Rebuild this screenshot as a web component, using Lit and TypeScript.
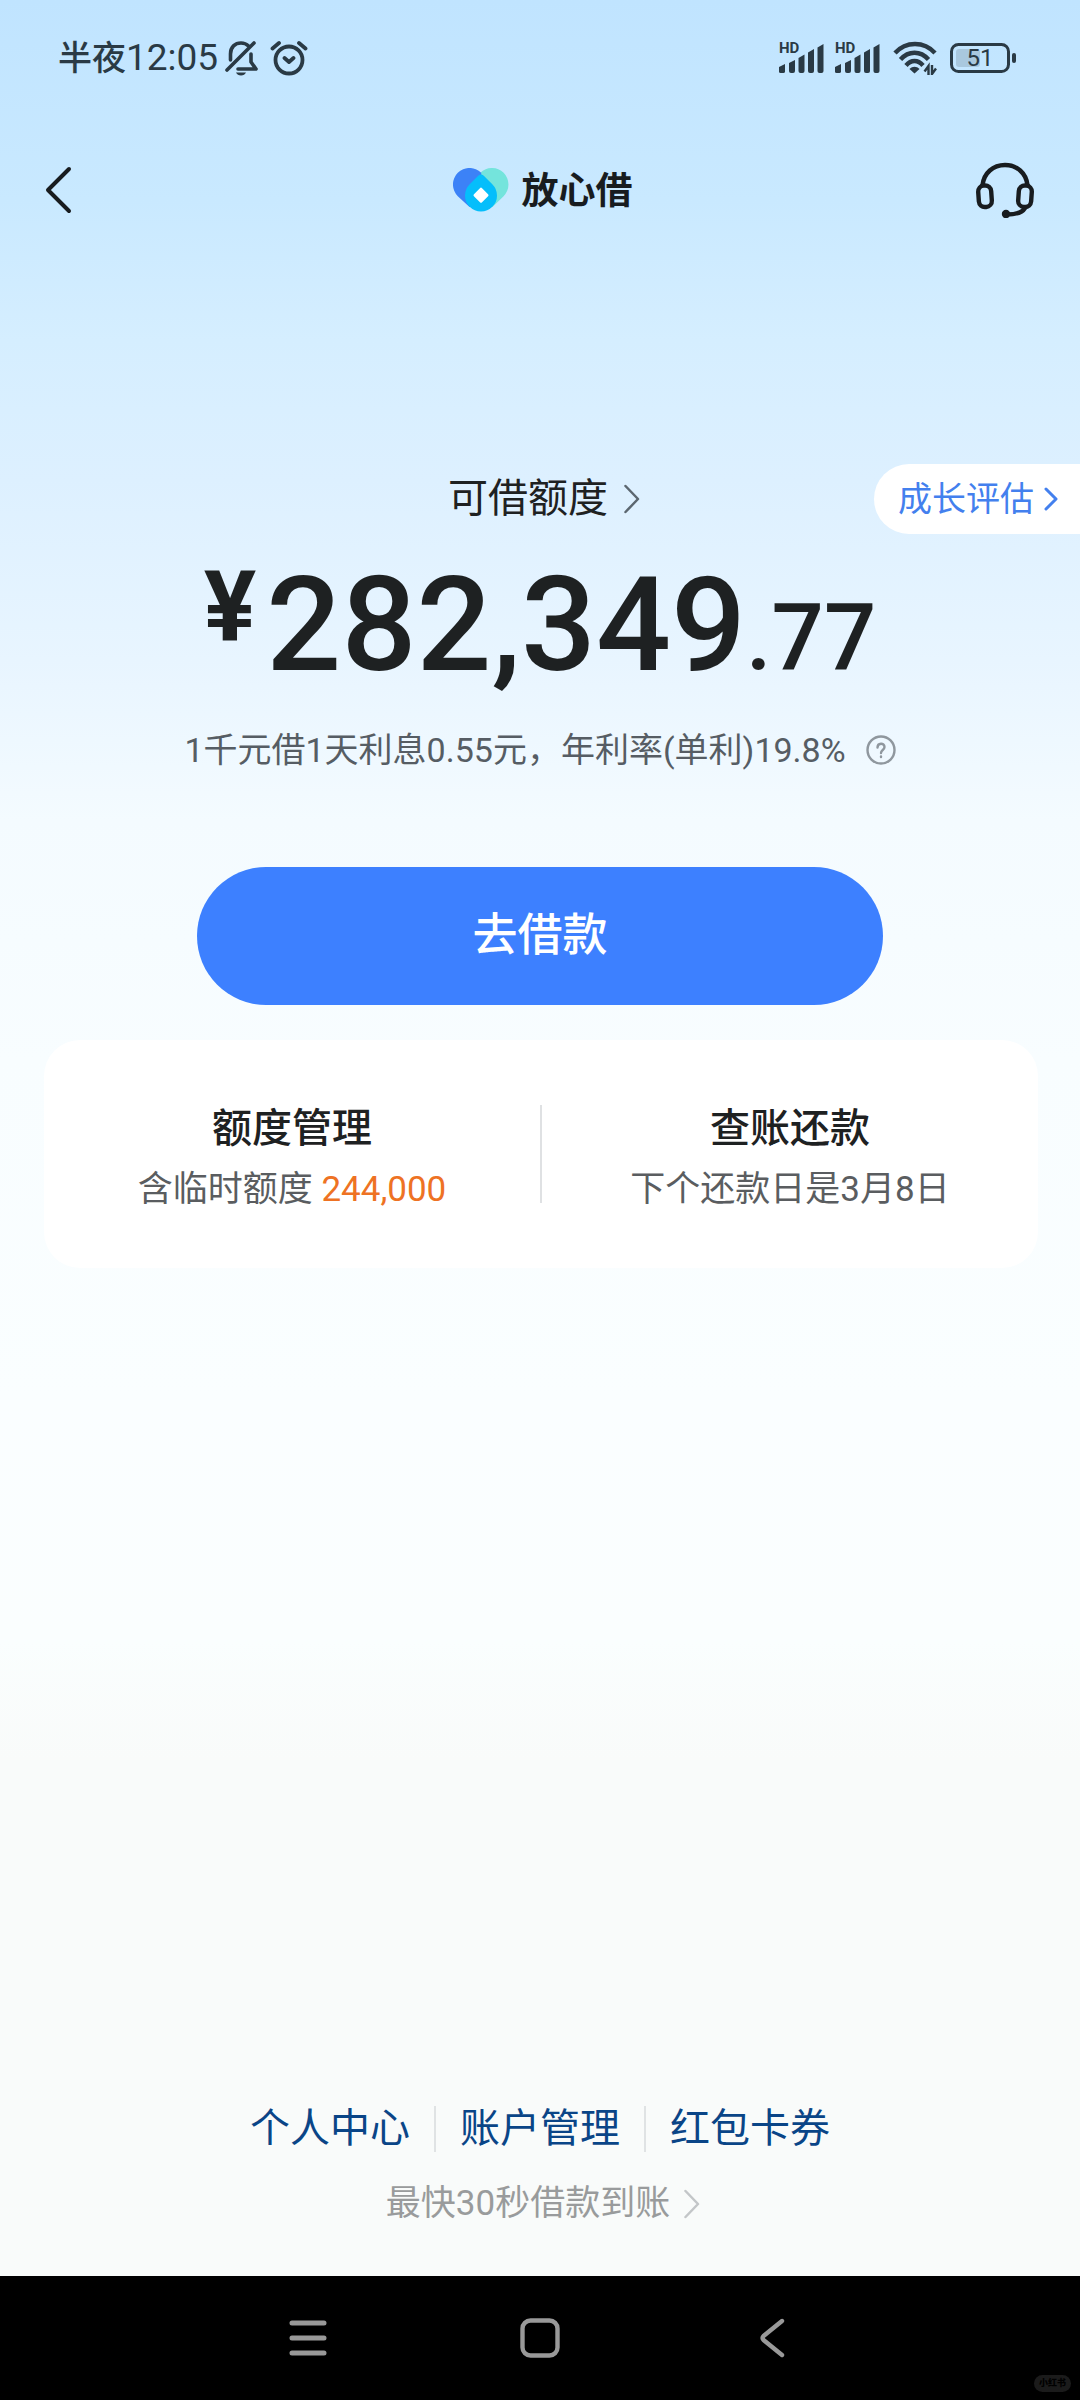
import { LitElement, html, css, svg } from "lit";
import { customElement } from "lit/decorators.js";

const signalBars = svg`
  <path d="M2 24l6-3v7.400a1.600 1.600 0 0 1-1.600 1.600H3.600A1.600 1.600 0 0 1 2 28.400Z"/>
  <path d="M12 20l6-3v11a2 2 0 0 1-2 2h-2a2 2 0 0 1-2-2Z"/>
  <path d="M21.500 15l6-3.500V28a2 2 0 0 1-2 2h-2a2 2 0 0 1-2-2Z"/>
  <path d="M31 9.500l6-3.500v22a2 2 0 0 1-2 2h-2a2 2 0 0 1-2-2Z"/>
  <path d="M40.500 4.500l6-3.500v27a2 2 0 0 1-2 2h-2a2 2 0 0 1-2-2Z"/>`;

@customElement("status-bar")
export class StatusBar extends LitElement {
  static styles = css`
    :host { display: flex; align-items: center; justify-content: space-between; padding: 34px 64px 0 58px; height: 48px; color: #2a3a45; font-family: Roboto, "Noto Sans CJK SC", sans-serif; }
    .side { display: flex; align-items: center; }
    .clock { font-size: 34px; line-height: 48px; font-weight: 500; margin-right: 6px; white-space: nowrap; }
    .time { font-size: 37px; font-weight: 400; }
    .gap { margin-right: 12px; }
    .signal { position: relative; display: flex; margin-right: 10px; }
    .hd { position: absolute; left: 0; top: -4px; font: 700 15px/18px Roboto, sans-serif; }
    .signal svg { fill: currentColor; }
    .wifi { margin: 0 13px 0 2px; }
    .battery { position: relative; display: flex; }
    .level { position: absolute; left: 0; top: 0; width: 60px; text-align: center; font: 400 24px/30px Roboto, sans-serif; }
  `;
  render() {
    const signal = html`<div class="signal">
      <span class="hd">HD</span>
      <svg width="46" height="30" viewBox="2 0 46 30">${signalBars}</svg>
    </div>`;
    return html`
      <div class="side">
        <span class="clock">半夜<span class="time">12:05</span></span>
        <svg class="gap" width="34" height="36" viewBox="0 0 34 36" fill="none" stroke="currentColor" stroke-width="3.600" stroke-linecap="round" stroke-linejoin="round">
          <path d="M6.500 20V14C6.500 7 11 3 17 3c3 0 5.500 1 7.500 3M27 14v8l5 7H14"/>
          <path d="M3 30L30 3"/>
          <path d="M12 32.500h10c-1 2-2.500 3-5 3s-4-1-5-3Z" fill="currentColor" stroke="none"/>
        </svg>
        <svg width="38" height="36" viewBox="0 0 38 36" fill="none" stroke="currentColor" stroke-width="3.800" stroke-linecap="round" stroke-linejoin="round">
          <circle cx="19" cy="20" r="13.500"/><path d="M14.500 18l4.500 4 4.500-4M2.500 8.500l6.500-5.500M35.500 8.500L29 3"/>
        </svg>
      </div>
      <div class="side">
        ${signal}${signal}
        <svg class="wifi" width="44" height="34" viewBox="0 0 44 34" fill="none" stroke="currentColor" stroke-width="4.400">
          <path d="M2 12C13 0 31 0 42 12M7.500 18.500c8-9 20-9 28 0M13 24.500c5-6 12-6 17 0"/>
          <path d="M21.500 32.500l-5-4.500c3-3 7-3 10 0Z" fill="currentColor" stroke="none"/>
          <path d="M35.500 34V25l-4 5.500M39 24v9l4-5.500" stroke-width="2.400"/>
        </svg>
        <div class="battery">
          <svg width="66" height="30" viewBox="0 0 66 30">
            <rect x="6" y="6" width="24" height="18" rx="3" fill="#a9c8de"/>
            <rect x="1.500" y="1.500" width="57" height="27" rx="7" fill="none" stroke="currentColor" stroke-width="3"/>
            <rect x="62" y="10" width="4" height="10" rx="2" fill="currentColor"/>
          </svg>
          <span class="level">51</span>
        </div>
      </div>`;
  }
}

@customElement("brand-header")
export class BrandHeader extends LitElement {
  static styles = css`
    :host { display: grid; grid-template-columns: 1fr auto 1fr; align-items: center; padding: 0 45px 0 44px; height: 64px; color: #181c1f; }
    button { all: unset; display: flex; cursor: pointer; }
    .help { justify-self: end; }
    .brand { display: flex; align-items: center; gap: 13px; padding-left: 6px; }
    .name { margin: 0; padding-bottom: 4px; font: 700 37px/48px "Noto Sans CJK SC", sans-serif; }
  `;
  render() {
    return html`
      <button aria-label="返回">
        <svg width="30" height="48" viewBox="0 0 30 48" fill="none" stroke="currentColor" stroke-width="4" stroke-linecap="round" stroke-linejoin="round"><path d="M25 3L4 24l21 21"/></svg>
      </button>
      <div class="brand">
        <svg width="56" height="44" viewBox="0 0 56 44">
          <path d="M50.600 28.200A16.500 16.500 0 1 0 27.300 4.800L28 30l11.500 9Z" fill="#74e4dc"/>
          <path d="M4.800 28.200A16.500 16.500 0 1 1 28.200 4.800L30 30l-13.500 9Z" fill="#3c82f7"/>
          <path d="M25.500 7.500q2.500-2 5 0l8.800 8.700a16 16 0 1 1-22.600 0Z" fill="#05befb"/>
          <path d="M28 21.200l6 6-6 6-6-6Z" fill="#fff" stroke="#fff" stroke-width="3" stroke-linejoin="round"/>
        </svg>
        <h1 class="name">放心借</h1>
      </div>
      <button class="help" aria-label="客服">
        <svg width="60" height="56" viewBox="0 0 60 56" fill="none" stroke="currentColor" stroke-width="4.400" stroke-linecap="round" stroke-linejoin="round">
          <path d="M7.500 23C9 11 18 3 30 3S51 11 52.500 23"/>
          <rect x="3.500" y="23.500" width="13" height="21.500" rx="6" transform="rotate(-4 10 34)"/>
          <rect x="43.500" y="23.500" width="13" height="21.500" rx="6" transform="rotate(4 50 34)"/>
          <path d="M50 46c-3 5-9 6.500-18 6.500"/><circle cx="31" cy="52" r="2" fill="currentColor"/>
        </svg>
      </button>`;
  }
}

@customElement("app-root")
export class AppRoot extends LitElement {
  static styles = css`
    :host {
      display: flex; flex-direction: column; min-height: 100vh; box-sizing: border-box; overflow: hidden;
      font-family: Roboto, "Noto Sans CJK SC", sans-serif; color: #1e2122;
      background: linear-gradient(#c0e4ff 0, #c9e9ff 200px, #d5eeff 340px, #ddf0ff 480px, #e8f5ff 660px, #f4fbff 820px, #f8fdff 1060px, #fafeff 1400px, #fafefe 1640px, #f9fbfa 1760px, #f9fbfa 100%);
    }
    a { color: inherit; text-decoration: none; }
    svg { flex: none; fill: none; stroke: currentColor; stroke-linecap: round; stroke-linejoin: round; }
    brand-header { margin-top: 76px; }
    main { display: flex; flex-direction: column; flex: 1; padding-top: 242px; }
    .quota { display: grid; grid-template-columns: 1fr auto 1fr; align-items: center; height: 70px; }
    .quota-link { grid-column: 2; display: flex; align-items: center; gap: 16px; font-size: 40px; line-height: 56px; padding-left: 8px; }
    .thin { color: #5c6770; }
    .assess { justify-self: end; display: flex; align-items: center; gap: 10px; height: 70px; padding: 0 22px 0 24px; border-radius: 35px 0 0 35px; background: #fff; color: #4380ee; font-size: 34px; line-height: 48px; }
    .amount { display: flex; justify-content: center; align-items: flex-start; margin: 16px 0 0; height: 150px; font-weight: 500; line-height: 150px; white-space: nowrap; }
    .yen { margin-right: 10px; font-size: 98px; font-weight: 700; line-height: 116px; }
    .whole { font-size: 132px; }
    .cents { font-size: 92px; line-height: 176px; }
    .rate { display: flex; justify-content: center; align-items: center; gap: 20px; margin: 24px 0 0; font-size: 34px; line-height: 52px; color: #565d64; white-space: nowrap; }
    .tip { all: unset; display: flex; cursor: pointer; color: #8f979e; }
    .borrow { align-self: center; width: 686px; max-width: 90%; height: 138px; margin-top: 91px; border: 0; border-radius: 69px; background: #3d80ff; color: #fff; font: 500 45px/64px Roboto, "Noto Sans CJK SC", sans-serif; cursor: pointer; }
    .card { display: flex; align-items: center; margin: 35px 42px 0 44px; height: 228px; border-radius: 36px; background: #fff; }
    .cell { flex: 1; padding-top: 12px; text-align: center; }
    .title { font-size: 40px; line-height: 60px; font-weight: 500; }
    .note { font-size: 35px; line-height: 62px; color: #5a5d60; }
    .hot { color: #ee7223; }
    .rule { width: 2px; height: 98px; background: #dfe1e3; }
    footer { margin-top: auto; padding-bottom: 46px; }
    .links { display: flex; justify-content: center; align-items: center; gap: 24px; font-size: 40px; line-height: 60px; color: #0a4587; }
    .sep { width: 2px; height: 46px; background: #e0e3e4; }
    .fast { display: flex; justify-content: center; align-items: center; gap: 14px; margin-top: 19px; padding-left: 6px; font-size: 35px; line-height: 52px; color: #999b9c; }
    .faint { color: #c3c6c8; }
    .system { position: relative; display: grid; grid-template-columns: repeat(3, 232px); justify-content: center; height: 124px; background: #000; color: #999; }
    .system button { all: unset; display: flex; justify-content: center; align-items: center; cursor: pointer; }
    .stamp { position: absolute; right: 9px; bottom: 8px; padding: 0 5px; border-radius: 9px; background: #1b1b1b; color: #000; font-weight: 900; font-size: 9px; line-height: 17px; }
  `;
  render() {
    return html`
      <status-bar></status-bar>
      <brand-header></brand-header>
      <main>
        <div class="quota">
          <a class="quota-link" href="#quota">可借额度<svg class="thin" width="16" height="30" viewBox="0 0 16 30" stroke-width="2.500"><path d="M1.500 2L14 15 1.500 28"/></svg></a>
          <a class="assess" href="#assess">成长评估<svg width="14" height="24" viewBox="0 0 14 24" stroke-width="3"><path d="M2 2l10 10L2 22"/></svg></a>
        </div>
        <p class="amount"><span class="yen">¥</span><span class="whole">282,349</span><span class="cents">.77</span></p>
        <p class="rate">1千元借1天利息0.55元，年利率(单利)19.8%
          <button class="tip" aria-label="说明"><svg width="30" height="30" viewBox="0 0 30 30" stroke-width="2.400"><circle cx="15" cy="15" r="13.500"/><path d="M11.500 12.500c0-5 7-5 7-.5 0 3-3.500 3-3.500 6M15 21.500v.5"/></svg></button>
        </p>
        <button class="borrow">去借款</button>
        <section class="card">
          <a class="cell" href="#manage"><div class="title">额度管理</div><div class="note">含临时额度 <span class="hot">244,000</span></div></a>
          <div class="rule"></div>
          <a class="cell" href="#repay"><div class="title">查账还款</div><div class="note">下个还款日是3月8日</div></a>
        </section>
        <footer>
          <nav class="links">
            <a href="#me">个人中心</a><span class="sep"></span><a href="#account">账户管理</a><span class="sep"></span><a href="#coupons">红包卡券</a>
          </nav>
          <a class="fast" href="#fast">最快30秒借款到账<svg class="faint" width="16" height="30" viewBox="0 0 16 30" stroke-width="2.500"><path d="M1.500 2L14 15 1.500 28"/></svg></a>
        </footer>
      </main>
      <div class="system">
        <button aria-label="最近任务"><svg width="38" height="38" viewBox="0 0 38 38" stroke-width="5"><path d="M3 4h32M3 19h32M3 34h32"/></svg></button>
        <button aria-label="主屏幕"><svg width="40" height="40" viewBox="0 0 40 40" stroke-width="4.400"><rect x="2.500" y="2.500" width="35" height="35" rx="8"/></svg></button>
        <button aria-label="返回"><svg width="26" height="40" viewBox="0 0 26 40" stroke-width="4.400"><path d="M23 3L4.500 18q-2 2 0 4L23 37"/></svg></button>
        <span class="stamp">小红书</span>
      </div>`;
  }
}
